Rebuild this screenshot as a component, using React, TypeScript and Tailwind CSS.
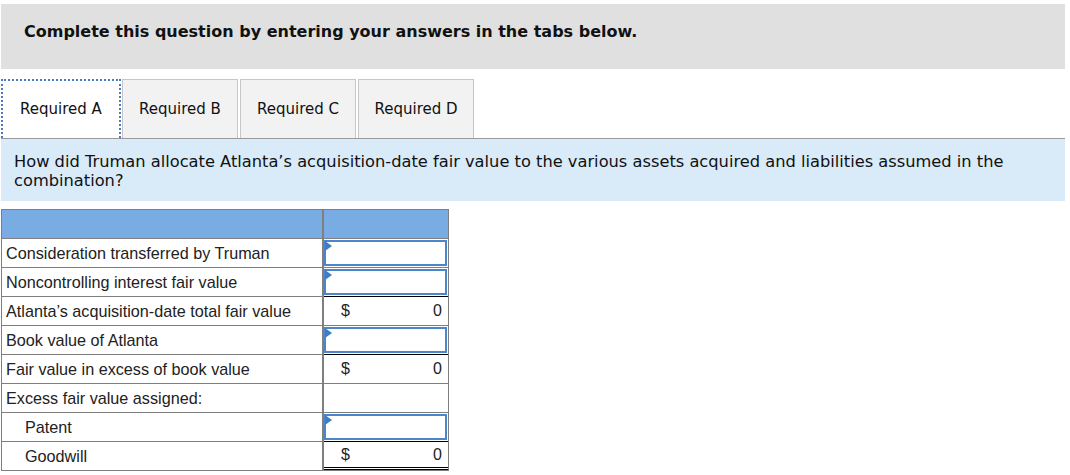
import React from 'react'

type Row = {
  label: string
  indent?: boolean
  kind: 'input' | 'total' | 'empty'
  topDark?: boolean
  doubleBottom?: boolean
}

const rows: Row[] = [
  { label: 'Consideration transferred by Truman', kind: 'input' },
  { label: 'Noncontrolling interest fair value', kind: 'input' },
  { label: 'Atlanta\u2019s acquisition-date total fair value', kind: 'total', topDark: true },
  { label: 'Book value of Atlanta', kind: 'input' },
  { label: 'Fair value in excess of book value', kind: 'total', topDark: true },
  { label: 'Excess fair value assigned:', kind: 'empty' },
  { label: 'Patent', indent: true, kind: 'input' },
  { label: 'Goodwill', indent: true, kind: 'total', topDark: true, doubleBottom: true },
]

function InputCell() {
  return (
    <div className="relative h-full border-2 border-[#4b86cc] bg-white">
      <span className="absolute left-[-1px] top-[-1px] h-0 w-0 border-y-[5px] border-l-[7px] border-y-transparent border-l-[#3d7cc9]" />
    </div>
  )
}

const tabs = ['Required A', 'Required B', 'Required C', 'Required D']

export default function App() {
  return (
    <div className="w-[1070px] h-[475px] bg-white overflow-hidden pt-[4px] pl-[1px] pr-[5px]" style={{ fontFamily: '"DejaVu Sans", Verdana, sans-serif' }}>
      <div className="h-[65px] bg-[#e0e0e0] flex items-center pl-[23px] pb-[9px]">
        <p className="text-[16px] font-bold text-[#111]">Complete this question by entering your answers in the tabs below.</p>
      </div>

      <div className="mt-[10px] flex items-end border-b border-[#9a9a9a]">
        {tabs.map((t, i) => (
          <div
            key={t}
            className={
              i === 0
                ? 'h-[59px] w-[120px] mr-[1px] flex items-center justify-center border-2 border-dotted border-[#4b7cc0] border-b-0 bg-white text-[15px] text-[#111]'
                : 'h-[59px] w-[116px] mr-[2px] flex items-center justify-center border border-[#c6c6c6] border-b-0 bg-[#f2f2f2] text-[15px] text-[#111]'
            }
          >
            {t}
          </div>
        ))}
      </div>

      <div className="h-[62px] bg-[#d9eaf8] pl-[13px] pt-[13px] text-[16.25px] leading-[19px] text-[#111]">
        How did Truman allocate Atlanta&rsquo;s acquisition-date fair value to the various assets acquired and liabilities assumed in the
        <br />
        combination?
      </div>

      <div className="mt-[8px] w-[448px]" style={{ fontFamily: '"Liberation Sans", Arial, sans-serif' }}>
        <div className="flex h-[30px] border border-[#7f7f7f] bg-[#79ace2]">
          <div className="w-[322px] border-r-2 border-[#7f7f7f]" />
          <div className="flex-1" />
        </div>
        {rows.map((r) => (
          <div key={r.label} className="flex h-[29px] border-x border-b border-[#7f7f7f]">
            <div className={`w-[322px] border-r-2 border-[#7f7f7f] flex items-center text-[16.2px] text-[#222] ${r.indent ? 'pl-[23px]' : 'pl-[4px]'}`}>
              {r.label}
            </div>
            <div
              className={`flex-1 ${r.topDark ? 'border-t border-black -mt-px' : ''} ${r.doubleBottom ? 'border-b-[3px] border-double border-b-black' : ''}`}
            >
              {r.kind === 'input' && (
                <div className="h-full py-px pr-px">
                  <InputCell />
                </div>
              )}
              {r.kind === 'total' && (
                <div className="h-full flex items-center justify-between pl-[17px] pr-[6px] text-[16px] text-[#222]">
                  <span>$</span>
                  <span>0</span>
                </div>
              )}
            </div>
          </div>
        ))}
      </div>
    </div>
  )
}
